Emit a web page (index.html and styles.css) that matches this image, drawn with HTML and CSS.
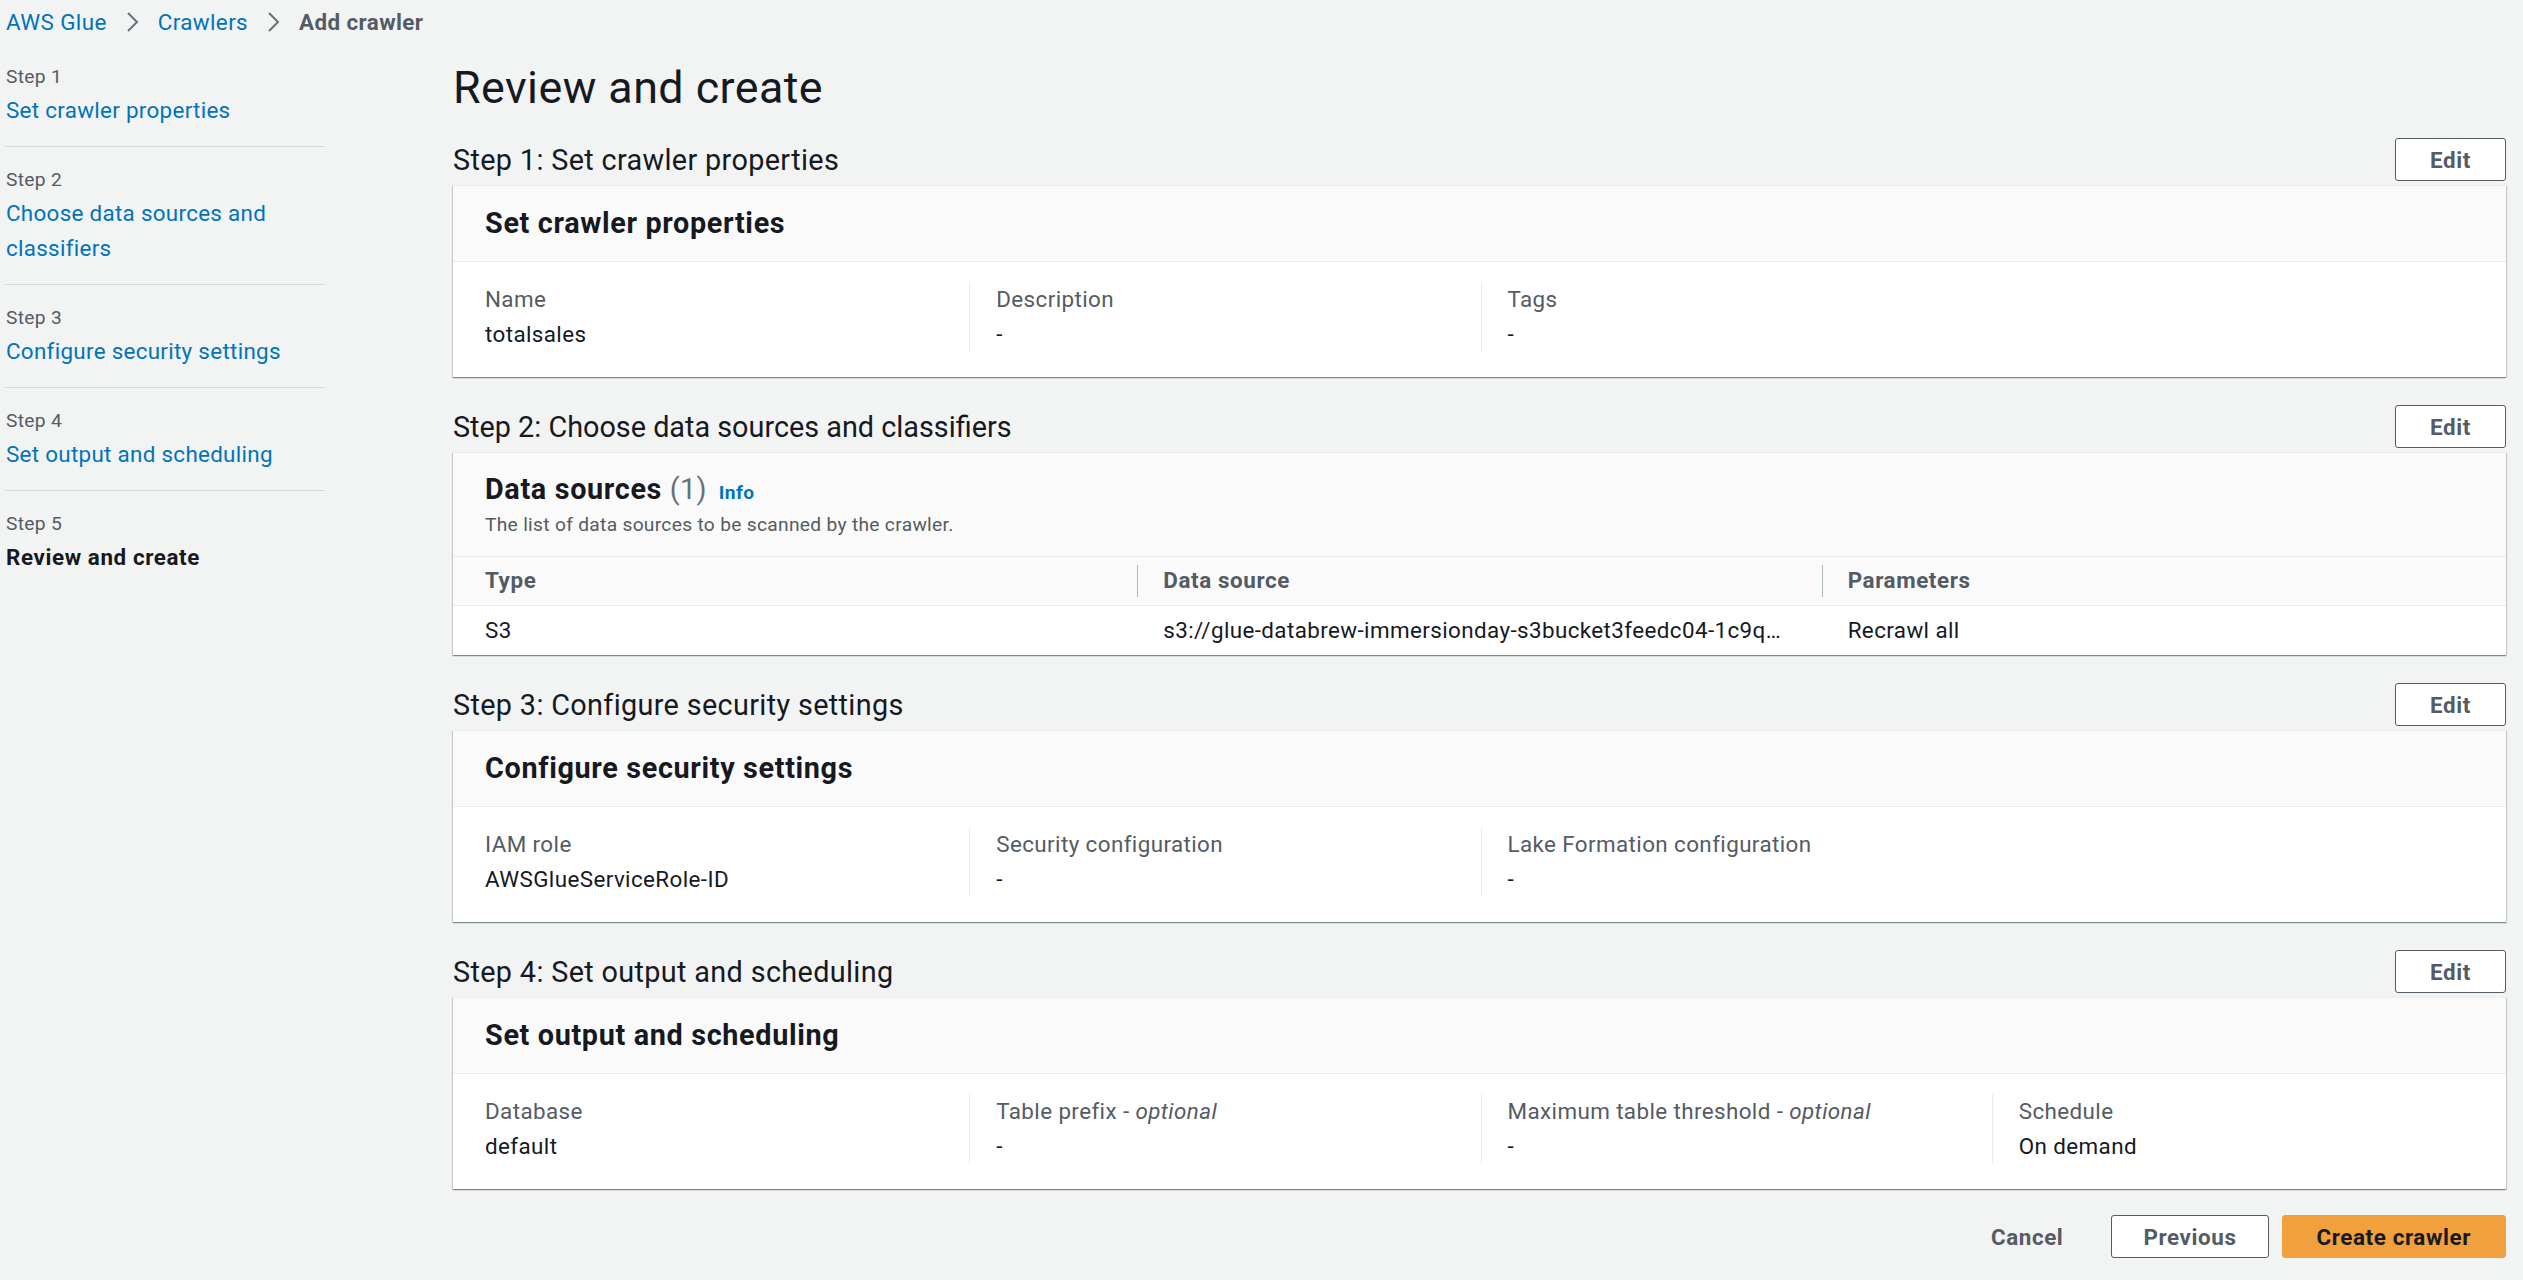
FILE: index.html
```html
<!DOCTYPE html>
<html lang="en">
<head>
<meta charset="utf-8">
<title>Add crawler - AWS Glue</title>
<link rel="stylesheet" href="styles.css">
</head>
<body>
<div class="page">
  <nav class="crumbs">
    <a class="crumb-link" href="#">AWS Glue</a>
    <svg class="chev" viewBox="0 0 13 22" aria-hidden="true"><path d="M2 2 L11 11 L2 20" /></svg>
    <a class="crumb-link" href="#">Crawlers</a>
    <svg class="chev" viewBox="0 0 13 22" aria-hidden="true"><path d="M2 2 L11 11 L2 20" /></svg>
    <span class="crumb-current">Add crawler</span>
  </nav>
  <div class="layout">
    <ul class="steps">
      <li class="step"><div class="step-num">Step 1</div><a class="step-link" href="#">Set crawler properties</a></li>
      <li class="step"><div class="step-num">Step 2</div><a class="step-link" href="#">Choose data sources and classifiers</a></li>
      <li class="step"><div class="step-num">Step 3</div><a class="step-link" href="#">Configure security settings</a></li>
      <li class="step"><div class="step-num">Step 4</div><a class="step-link" href="#">Set output and scheduling</a></li>
      <li class="step"><div class="step-num">Step 5</div><span class="step-current">Review and create</span></li>
    </ul>
    <main class="main">
      <h1 class="title">Review and create</h1>

      <section class="review">
        <div class="review-head">
          <h2 class="review-title">Step 1: Set crawler properties</h2>
          <button class="btn">Edit</button>
        </div>
        <div class="card">
          <div class="card-head"><h3 class="card-title">Set crawler properties</h3></div>
          <div class="kv">
            <div class="kv-col"><div class="kv-label">Name</div><div class="kv-value">totalsales</div></div>
            <div class="kv-col"><div class="kv-label">Description</div><div class="kv-value">-</div></div>
            <div class="kv-col"><div class="kv-label">Tags</div><div class="kv-value">-</div></div>
          </div>
        </div>
      </section>

      <section class="review">
        <div class="review-head">
          <h2 class="review-title review-title-tight">Step 2: Choose data sources and classifiers</h2>
          <button class="btn">Edit</button>
        </div>
        <div class="card">
          <div class="card-head card-head-tall">
            <h3 class="card-title">Data sources <span class="count">(1)</span> <a class="info" href="#">Info</a></h3>
            <div class="card-desc">The list of data sources to be scanned by the crawler.</div>
          </div>
          <table class="table">
            <thead>
              <tr><th>Type</th><th>Data source</th><th>Parameters</th></tr>
            </thead>
            <tbody>
              <tr><td>S3</td><td>s3://glue-databrew-immersionday-s3bucket3feedc04-1c9q…</td><td>Recrawl all</td></tr>
            </tbody>
          </table>
        </div>
      </section>

      <section class="review">
        <div class="review-head">
          <h2 class="review-title">Step 3: Configure security settings</h2>
          <button class="btn">Edit</button>
        </div>
        <div class="card">
          <div class="card-head"><h3 class="card-title">Configure security settings</h3></div>
          <div class="kv">
            <div class="kv-col"><div class="kv-label">IAM role</div><div class="kv-value">AWSGlueServiceRole-ID</div></div>
            <div class="kv-col"><div class="kv-label">Security configuration</div><div class="kv-value">-</div></div>
            <div class="kv-col"><div class="kv-label">Lake Formation configuration</div><div class="kv-value">-</div></div>
          </div>
        </div>
      </section>

      <section class="review">
        <div class="review-head">
          <h2 class="review-title">Step 4: Set output and scheduling</h2>
          <button class="btn">Edit</button>
        </div>
        <div class="card">
          <div class="card-head"><h3 class="card-title">Set output and scheduling</h3></div>
          <div class="kv">
            <div class="kv-col"><div class="kv-label">Database</div><div class="kv-value">default</div></div>
            <div class="kv-col"><div class="kv-label">Table prefix - <i>optional</i></div><div class="kv-value">-</div></div>
            <div class="kv-col"><div class="kv-label">Maximum table threshold - <i>optional</i></div><div class="kv-value">-</div></div>
            <div class="kv-col"><div class="kv-label">Schedule</div><div class="kv-value">On demand</div></div>
          </div>
        </div>
      </section>

      <div class="actions">
        <button class="btn btn-link">Cancel</button>
        <button class="btn btn-prev">Previous</button>
        <button class="btn btn-primary">Create crawler</button>
      </div>
    </main>
  </div>
</div>
</body>
</html>
```

FILE: styles.css
```css
* { box-sizing: border-box; }

body {
  margin: 0;
  background: #f2f3f3;
  font-family: Roboto, "Liberation Sans", sans-serif;
  font-size: 22.4px;
  line-height: 35px;
  letter-spacing: 0.4px;
  color: #16191f;
}

.page {
  padding: 0 17px 0 5px;
}

/* Breadcrumbs */
.crumbs {
  height: 44px;
  display: flex;
  align-items: center;
  gap: 19px;
  padding-left: 1px;
}
.crumb-link {
  color: #0073bb;
  text-decoration: none;
}
.crumb-current {
  color: #545b64;
  font-weight: 700;
  letter-spacing: 0.4px;
}
.chev {
  width: 13px;
  height: 22px;
  fill: none;
  stroke: #687078;
  stroke-width: 2;
}

/* Layout */
.layout {
  display: grid;
  grid-template-columns: 320px 1fr;
  column-gap: 128px;
}

/* Wizard steps */
.steps {
  list-style: none;
  margin: 0;
  padding: 0;
}
.step {
  padding: 17px 0 18px 1px;
  border-bottom: 1px solid #d5dbdb;
}
.step:last-child {
  border-bottom: none;
}
.step-num {
  font-size: 19.2px;
  line-height: 32px;
  letter-spacing: 0.3px;
  color: #545b64;
}
.step-link {
  display: block;
  color: #0073bb;
  text-decoration: none;
  letter-spacing: 0.3px;
}
.step-current {
  display: block;
  font-weight: 700;
  letter-spacing: 0.6px;
}

/* Main */
.main {
  padding-top: 12px;
}
.title {
  margin: 0;
  font-size: 44.8px;
  line-height: 64px;
  font-weight: 400;
  letter-spacing: 0.45px;
}
.review {
  margin-top: 18px;
}
.review + .review {
  margin-top: 28px;
}
.review-head {
  display: flex;
  justify-content: space-between;
  align-items: center;
  height: 43px;
  margin-bottom: 4px;
}
.review-title {
  margin: 0;
  font-size: 28.8px;
  line-height: 40px;
  font-weight: 400;
  letter-spacing: 0.35px;
}
.review-title-tight {
  letter-spacing: 0;
}

/* Buttons */
.btn {
  height: 43px;
  padding: 0 34px;
  border: 1px solid #545b64;
  border-radius: 3px;
  background: #fff;
  color: #545b64;
  font-family: Roboto, "Liberation Sans", sans-serif;
  font-size: 22.4px;
  font-weight: 700;
  letter-spacing: 0.6px;
  cursor: pointer;
}
.btn-link {
  border-color: transparent;
  background: transparent;
}
.btn-prev {
  padding: 0 31px;
}
.btn-primary {
  background: #f0a03c;
  border-color: #f0a03c;
  color: #16191f;
}

/* Cards */
.card {
  background: #fff;
  border-top: 1px solid #eaeded;
  box-shadow: 0 1px 1px 0 rgba(0, 28, 36, 0.3), 1px 1px 1px 0 rgba(0, 28, 36, 0.15), -1px 1px 1px 0 rgba(0, 28, 36, 0.15);
}
.card-head {
  height: 76px;
  display: flex;
  align-items: center;
  padding: 0 32px;
  background: #fafafa;
  border-bottom: 1px solid #eaeded;
}
.card-head-tall {
  height: auto;
  display: block;
  padding: 19px 32px 17px;
}
.card-title {
  margin: 0;
  font-size: 28.8px;
  line-height: 35px;
  font-weight: 700;
  letter-spacing: 0.65px;
}
.count {
  font-weight: 400;
  color: #687078;
  letter-spacing: 0.35px;
}
.info {
  margin-left: 4px;
  font-size: 19.2px;
  font-weight: 700;
  letter-spacing: 0.4px;
  color: #0073bb;
  text-decoration: none;
}
.card-desc {
  font-size: 19.2px;
  line-height: 29px;
  letter-spacing: 0.3px;
  color: #545b64;
}

/* Key/value columns */
.kv {
  display: grid;
  grid-template-columns: repeat(4, 1fr);
  padding: 20px 3px 25px 5px;
}
.kv-col {
  padding-left: 27px;
}
.kv-col + .kv-col {
  border-left: 1px solid #eaeded;
  padding-left: 26px;
}
.kv-label {
  color: #545b64;
}
.kv-label i {
  font-style: italic;
}

/* Table */
.table {
  width: 100%;
  border-collapse: collapse;
  table-layout: fixed;
}
.table th {
  position: relative;
  height: 48px;
  padding: 0 20px 0 26px;
  background: #fafafa;
  border-bottom: 1px solid #eaeded;
  text-align: left;
  font-weight: 700;
  letter-spacing: 0.6px;
  color: #545b64;
}
.table th + th::before {
  content: "";
  position: absolute;
  left: 0;
  top: 8px;
  bottom: 8px;
  width: 1px;
  background: #aab7b8;
}
.table td {
  height: 50px;
  padding: 0 20px 0 26px;
  white-space: nowrap;
  overflow: hidden;
  text-overflow: ellipsis;
}
.table th:first-child,
.table td:first-child {
  padding-left: 32px;
}

/* Footer actions */
.actions {
  display: flex;
  justify-content: flex-end;
  gap: 13px;
  margin-top: 26px;
}
```
